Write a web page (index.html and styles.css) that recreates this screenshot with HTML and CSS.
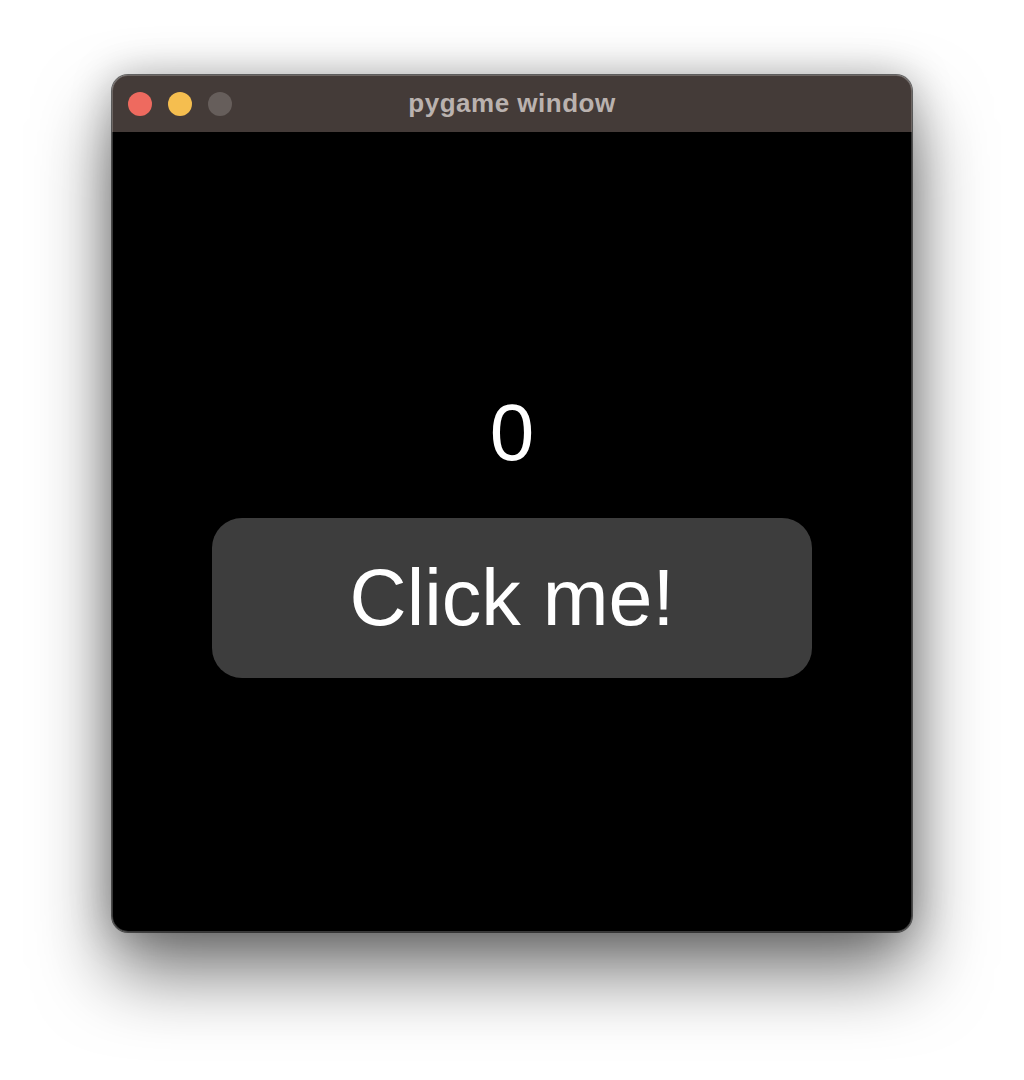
FILE: index.html
```html
<!DOCTYPE html>
<html>
<head>
<meta charset="utf-8">
<title>pygame window</title>
<link rel="stylesheet" href="styles.css">
</head>
<body>
  <div class="window">
    <div class="titlebar">
      <div class="lights">
        <span class="light red"></span>
        <span class="light yellow"></span>
        <span class="light gray"></span>
      </div>
      <div class="title">pygame window</div>
    </div>
    <div class="content">
      <div class="counter">0</div>
      <div class="button">Click me!</div>
    </div>
  </div>
</body>
</html>
```
FILE: styles.css
```css
html, body {
  margin: 0;
  padding: 0;
  background: #ffffff;
}
body {
  width: 1024px;
  height: 1080px;
  overflow: hidden;
  font-family: "Liberation Sans", Arial, sans-serif;
}
.window {
  width: 800px;
  margin: 75px auto 0;
  border-radius: 16px;
  overflow: hidden;
  box-shadow:
    0 0 0 1px rgba(0, 0, 0, 0.55),
    0 40px 75px rgba(0, 0, 0, 0.55),
    0 0 40px rgba(0, 0, 0, 0.25);
  position: relative;
}
.window::after {
  content: "";
  position: absolute;
  inset: 0;
  border-radius: 16px;
  box-shadow: inset 0 0 0 1px rgba(255, 255, 255, 0.22);
  pointer-events: none;
}
.titlebar {
  height: 57px;
  background: #443b38;
  display: flex;
  align-items: center;
  position: relative;
}
.lights {
  display: flex;
  gap: 16px;
  padding-left: 16px;
}
.light {
  width: 24px;
  height: 24px;
  border-radius: 50%;
  display: block;
}
.red { background: #ee6a5f; }
.yellow { background: #f5be4f; }
.gray { background: #665e5b; }
.title {
  position: absolute;
  left: 0;
  right: 0;
  top: 0;
  bottom: 0;
  display: flex;
  align-items: center;
  justify-content: center;
  color: #bab2af;
  font-weight: bold;
  font-size: 26px;
  letter-spacing: 0.5px;
  padding-bottom: 1px;
}
.content {
  height: 800px;
  background: #000000;
  display: flex;
  flex-direction: column;
  align-items: center;
  padding-top: 261px;
  box-sizing: border-box;
}
.counter {
  color: #ffffff;
  font-size: 80px;
  line-height: 80px;
  height: 80px;
}
.button {
  margin-top: 45px;
  width: 600px;
  height: 160px;
  border-radius: 30px;
  background: #3d3d3d;
  color: #ffffff;
  font-size: 79px;
  line-height: 80px;
  display: flex;
  align-items: center;
  justify-content: center;
}
```
